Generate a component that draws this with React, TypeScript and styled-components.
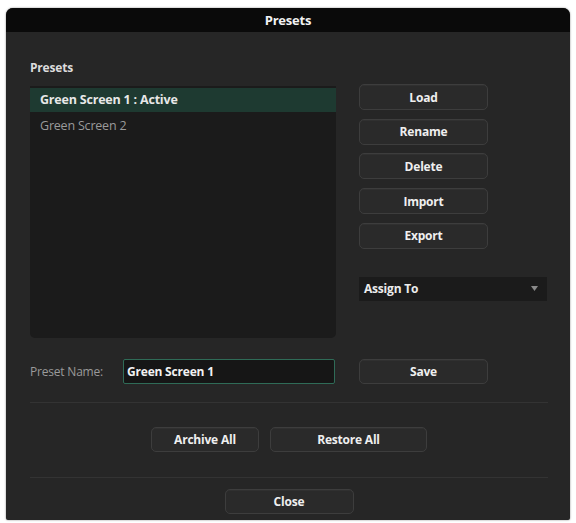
import styled, {createGlobalStyle} from 'styled-components';

const GlobalStyle = createGlobalStyle`
    html, body {
        margin: 0;
        background: #ffffff;
    }
    body {
        font-family: "Open Sans", Lato, "Liberation Sans", sans-serif;
    }
`;

const presets = [
    {name: 'Green Screen 1 : Active', active: true},
    {name: 'Green Screen 2', active: false},
];

const actions = ['Load', 'Rename', 'Delete', 'Import', 'Export'];

const App = () => {
    return (
        <Page>
            <GlobalStyle/>
            <Dialog>
                <TitleBar>Presets</TitleBar>
                <Body>
                    <Top>
                        <ListColumn>
                            <SectionLabel>Presets</SectionLabel>
                            <PresetList>
                                {presets.map((p) => (
                                    <PresetRow key={p.name} $active={p.active}>{p.name}</PresetRow>
                                ))}
                            </PresetList>
                        </ListColumn>
                        <SideColumn>
                            <ButtonStack>
                                {actions.map((a) => (
                                    <Button key={a}>{a}</Button>
                                ))}
                            </ButtonStack>
                            <Select>
                                <span>Assign To</span>
                                <svg width="7" height="5" viewBox="0 0 7 5">
                                    <path d="M0 0 L7 0 L3.5 5 Z" fill="#8a8a8a"/>
                                </svg>
                            </Select>
                        </SideColumn>
                    </Top>
                    <NameRow>
                        <NameLabel>Preset Name:</NameLabel>
                        <NameInput defaultValue="Green Screen 1"/>
                        <Button $height={25}>Save</Button>
                    </NameRow>
                    <Divider/>
                    <CenterRow $gap={11}>
                        <Button $width={108} $height={25}>Archive All</Button>
                        <Button $width={157} $height={25}>Restore All</Button>
                    </CenterRow>
                    <Divider $top={25}/>
                    <CenterRow $gap={0} $top={11}>
                        <Button $height={25}>Close</Button>
                    </CenterRow>
                </Body>
            </Dialog>
        </Page>
    );
}

const Page = styled.div`
    padding: 8px 6px 2px 6px;
`;

const Dialog = styled.div`
    width: 564px;
    border-radius: 7px 7px 2px 2px;
    overflow: hidden;
    background: #262626;
    box-shadow: 0 0 2px rgba(0, 0, 0, 0.5);
`;

const TitleBar = styled.div`
    height: 24px;
    line-height: 24px;
    background: #0a0a0a;
    color: #f2f2f2;
    text-align: center;
    font-size: 13px;
    font-weight: 700;
    letter-spacing: -0.2px;
`;

const Body = styled.div`
    padding: 28px 22px 6px 24px;
`;

const Top = styled.div`
    display: flex;
    gap: 23px;
`;

const ListColumn = styled.div`
    display: flex;
    flex-direction: column;
`;

const SectionLabel = styled.div`
    color: #dcdcdc;
    font-size: 12px;
    font-weight: 700;
    height: 16px;
    line-height: 16px;
    margin-bottom: 10px;
    letter-spacing: -0.2px;
`;

const PresetList = styled.div`
    width: 306px;
    height: 252px;
    padding-top: 2px;
    box-sizing: border-box;
    background: #1b1b1b;
    border-radius: 0 0 5px 5px;
`;

const PresetRow = styled.div<{ $active: boolean }>`
    height: 24px;
    line-height: 24px;
    padding-left: 10px;
    font-size: 12.5px;
    letter-spacing: -0.2px;
    font-weight: ${(p) => (p.$active ? 700 : 400)};
    color: ${(p) => (p.$active ? '#e8e8e8' : '#9a9a9a')};
    background: ${(p) => (p.$active ? '#1e3a31' : 'transparent')};
    margin-bottom: 2px;
`;

const SideColumn = styled.div`
    display: flex;
    flex-direction: column;
    padding-top: 24px;
`;

const ButtonStack = styled.div`
    display: flex;
    flex-direction: column;
    gap: 8.7px;
`;

const Button = styled.button<{ $width?: number; $height?: number }>`
    width: ${(p) => p.$width || 129}px;
    height: ${(p) => p.$height || 26}px;
    box-sizing: border-box;
    background: #2a2a2a;
    border: 1px solid #3d3d3d;
    border-radius: 5px;
    color: #efefef;
    font-family: inherit;
    font-size: 12px;
    font-weight: 700;
    letter-spacing: -0.2px;
    padding: 0;
    box-shadow: inset 0 1px 0 rgba(255, 255, 255, 0.03);
`;

const Select = styled.div`
    margin-top: 28px;
    width: 188px;
    height: 24px;
    box-sizing: border-box;
    background: #1b1b1b;
    display: flex;
    align-items: center;
    justify-content: space-between;
    padding: 0 9px 0 5px;
    color: #ececec;
    font-size: 12px;
    font-weight: 700;
    letter-spacing: -0.2px;
`;

const NameRow = styled.div`
    display: flex;
    align-items: center;
    margin-top: 21px;
`;

const NameLabel = styled.div`
    width: 93px;
    color: #9a9a9a;
    font-size: 12px;
    letter-spacing: -0.2px;
`;

const NameInput = styled.input`
    width: 212px;
    height: 25px;
    box-sizing: border-box;
    margin-right: 24px;
    background: #161616;
    border: 1px solid #2f6b57;
    border-radius: 2px;
    outline: none;
    color: #f2f2f2;
    font-family: inherit;
    font-size: 12px;
    font-weight: 700;
    letter-spacing: -0.2px;
    padding: 0 3px;
`;

const Divider = styled.div<{ $top?: number }>`
    height: 1px;
    background: #333333;
    margin-top: ${(p) => p.$top ?? 18}px;
`;

const CenterRow = styled.div<{ $gap: number; $top?: number }>`
    display: flex;
    justify-content: center;
    gap: ${(p) => p.$gap}px;
    margin-top: ${(p) => p.$top ?? 24}px;
`;

export default App;
